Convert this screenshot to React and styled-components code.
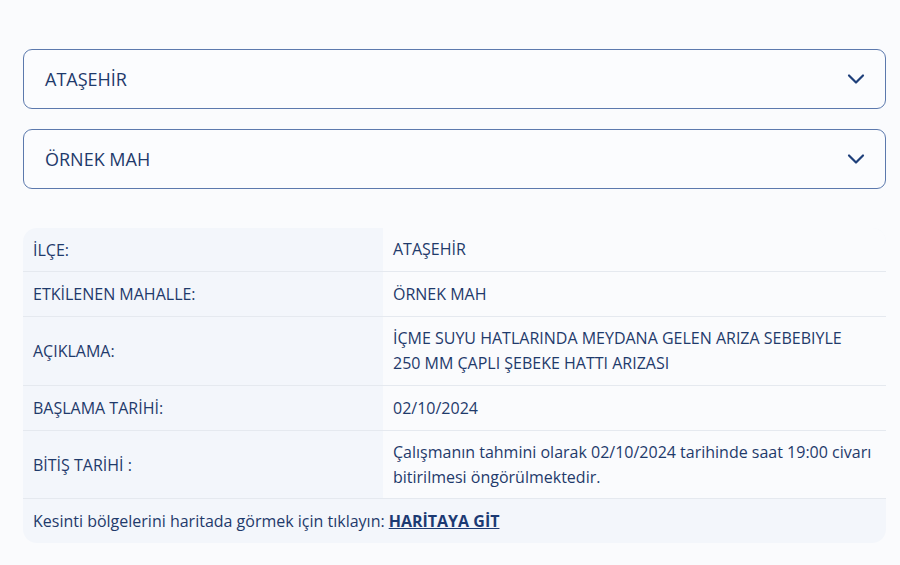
import React from "react";
import styled, { createGlobalStyle } from "styled-components";

const Global = createGlobalStyle`
  *, *::before, *::after { box-sizing: border-box; }
  html, body { margin: 0; padding: 0; background: #fafbfd; }
  body { font-family: "Open Sans", "Noto Sans", sans-serif; color: #1f3a6b; }
`;

const Page = styled.div`
  padding: 49px 14px 20px 23px;
  display: flex;
  flex-direction: column;
  gap: 20px;
`;

const Select = styled.div`
  height: 60px;
  border: 1px solid #5c79ad;
  border-radius: 9px;
  display: flex;
  align-items: center;
  justify-content: space-between;
  padding: 0 20px 0 21px;
  font-size: 18px;
  color: #1f3a6b;
  background: #fbfcfe;
`;

const Chevron = () => (
  <svg width="18" height="12" viewBox="0 0 18 12" fill="none">
    <path d="M2 2.5 L9 9.5 L16 2.5" stroke="#1e3f7a" strokeWidth="2.2" strokeLinecap="round" strokeLinejoin="round" />
  </svg>
);

const Table = styled.div`
  margin-top: 19px;
  background: #f3f6fb;
  border-radius: 14px;
  overflow: hidden;
  display: grid;
  grid-template-columns: 360px 1fr;
`;

const Label = styled.div`
  padding: 0 10px;
  min-height: ${(p) => p.$h}px;
  display: flex;
  align-items: center;
  font-size: 16px;
  color: #1f3a6b;
  border-bottom: 1px solid #e5e9ef;
`;

const Value = styled(Label)`
  background: #fafbfd;
  line-height: 25px;
  padding: 8px 10px;
`;

const Footer = styled.div`
  grid-column: 1 / span 2;
  height: 44px;
  display: flex;
  align-items: center;
  padding: 0 10px;
  font-size: 16px;
  color: #1f3a6b;
`;

const Link = styled.a`
  font-weight: 700;
  color: #1c3a73;
  text-decoration: underline;
  margin-left: 4px;
`;

const rows = [
  ["İLÇE:", "ATAŞEHİR", 44],
  ["ETKİLENEN MAHALLE:", "ÖRNEK MAH", 45],
  ["AÇIKLAMA:", "İÇME SUYU HATLARINDA MEYDANA GELEN ARIZA SEBEBIYLE\n250 MM ÇAPLI ŞEBEKE HATTI ARIZASI", 69],
  ["BAŞLAMA TARİHİ:", "02/10/2024", 45],
  ["BİTİŞ TARİHİ :", "Çalışmanın tahmini olarak 02/10/2024 tarihinde saat 19:00 civarı\nbitirilmesi öngörülmektedir.", 68],
];

export default function App() {
  return (
    <>
      <Global />
      <Page>
        <Select>
          <span>ATAŞEHİR</span>
          <Chevron />
        </Select>
        <Select>
          <span>ÖRNEK MAH</span>
          <Chevron />
        </Select>
        <Table>
          {rows.map(([l, v, h]) => (
            <React.Fragment key={l}>
              <Label $h={h}>{l}</Label>
              <Value $h={h}>
                <span style={{ whiteSpace: "pre-line" }}>{v}</span>
              </Value>
            </React.Fragment>
          ))}
          <Footer>
            Kesinti bölgelerini haritada görmek için tıklayın:
            <Link href="#">HARİTAYA GİT</Link>
          </Footer>
        </Table>
      </Page>
    </>
  );
}
